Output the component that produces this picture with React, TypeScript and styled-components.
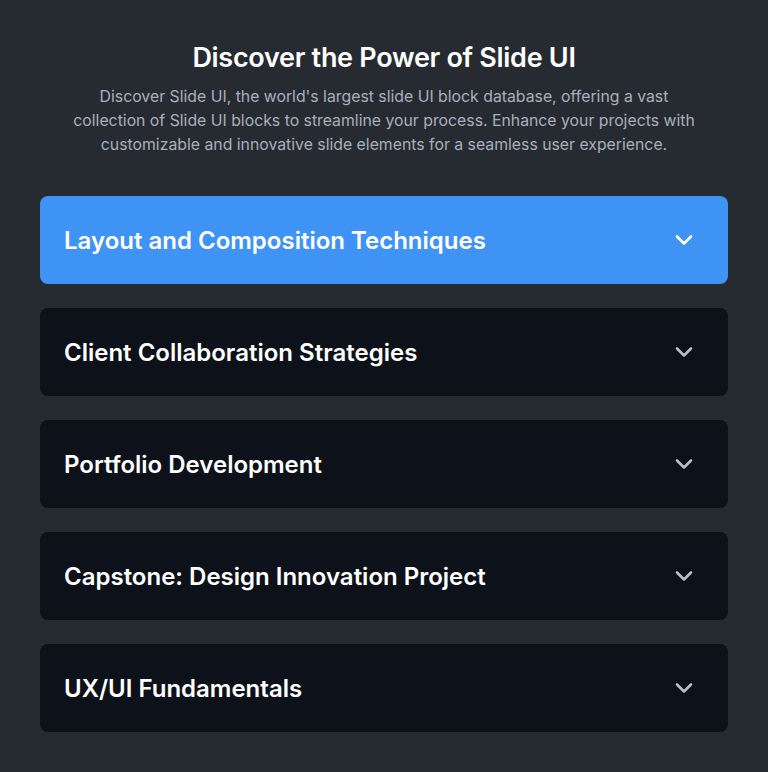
import React, { useState } from "react";
import styled, { createGlobalStyle } from "styled-components";

const Global = createGlobalStyle`
  html, body { margin: 0; padding: 0; background: #262b32; }
  body { font-family: Inter, "Noto Sans", sans-serif; -webkit-font-smoothing: antialiased; }
`;

const Page = styled.div`
  min-height: 772px;
  box-sizing: border-box;
  padding: 41px 40px 40px;
  background: #262b32;
  display: flex;
  flex-direction: column;
  align-items: center;
`;

const Title = styled.h1`
  margin: 0;
  font-size: 27px;
  line-height: 34px;
  font-weight: 600;
  color: #ffffff;
  letter-spacing: -0.3px;
  text-align: center;
`;

const Subtitle = styled.p`
  margin: 10px 0 0;
  max-width: 636px;
  font-size: 15.8px;
  line-height: 24px;
  color: #a9b0ba;
  text-align: center;
`;

const List = styled.div`
  margin-top: 39px;
  width: 100%;
  display: flex;
  flex-direction: column;
  gap: 24px;
`;

const Item = styled.button<{ $active: boolean }>`
  all: unset;
  box-sizing: border-box;
  height: 88px;
  width: 100%;
  padding: 0 32px 0 24px;
  border-radius: 8px;
  display: flex;
  align-items: center;
  justify-content: space-between;
  cursor: pointer;
  background: ${(p) => (p.$active ? "#3f93f5" : "#0d1119")};
  color: #ffffff;
`;

const Label = styled.span`
  font-size: 24px;
  font-weight: 600;
  letter-spacing: 0;
`;

const Chevron = styled.svg<{ $active: boolean }>`
  width: 24px;
  height: 24px;
  color: ${(p) => (p.$active ? "#ffffff" : "#b8bec7")};
`;

const items = [
  "Layout and Composition Techniques",
  "Client Collaboration Strategies",
  "Portfolio Development",
  "Capstone: Design Innovation Project",
  "UX/UI Fundamentals",
];

export default function App() {
  const [active, setActive] = useState(0);
  return (
    <Page>
      <Global />
      <Title>Discover the Power of Slide UI</Title>
      <Subtitle>
        Discover Slide UI, the world's largest slide UI block database, offering a vast
        collection of Slide UI blocks to streamline your process. Enhance your projects with
        customizable and innovative slide elements for a seamless user experience.
      </Subtitle>
      <List>
        {items.map((t, i) => (
          <Item key={t} $active={active === i} onClick={() => setActive(i)}>
            <Label>{t}</Label>
            <Chevron $active={active === i} viewBox="0 0 24 24" fill="none" stroke="currentColor" strokeWidth={2.6} strokeLinecap="round" strokeLinejoin="round">
              <path d="M5 8.5l7 7 7-7" />
            </Chevron>
          </Item>
        ))}
      </List>
    </Page>
  );
}
